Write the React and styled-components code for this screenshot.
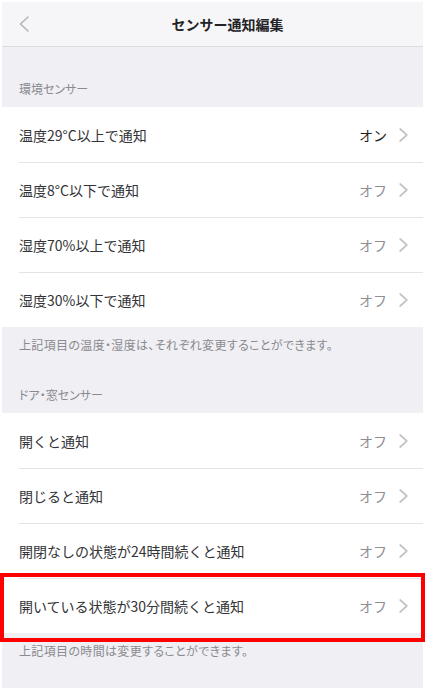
import React from "react";
import styled, { createGlobalStyle } from "styled-components";

const GlobalStyle = createGlobalStyle`
  html, body { margin: 0; padding: 0; background: #ffffff; }
  body { font-family: "Noto Sans CJK JP", "Noto Sans", sans-serif; -webkit-font-smoothing: antialiased; }
  * { box-sizing: border-box; }
`;

const Frame = styled.div`
  padding: 2px 3px 0 2px;
  height: 688px;
  overflow: hidden;
  background: #ffffff;
`;

const Screen = styled.div`
  background: #efeff4;
  min-height: 686px;
`;

const NavBar = styled.header`
  height: 45px;
  display: flex;
  align-items: center;
  background: #f6f6f8;
  border-bottom: 1px solid #dcdce0;
`;

const BackButton = styled.button`
  width: 60px;
  height: 44px;
  border: 0;
  background: transparent;
  padding: 0 0 0 16px;
  display: flex;
  align-items: center;
`;

const NavTitle = styled.h1`
  flex: 1;
  margin: 0;
  text-align: center;
  font-size: 14px;
  font-weight: 600;
  color: #222226;
`;

const NavSpacer = styled.div`
  width: 30px;
`;

const SectionHeader = styled.div`
  height: ${(p) => p.$height}px;
  display: flex;
  align-items: flex-end;
  padding: 0 17px 10px;
  font-size: 12px;
  line-height: 17px;
  color: #8a8a8f;
  font-feature-settings: "palt";
`;

const SectionFooter = styled.p`
  margin: 0;
  padding: 9px 17px 0;
  font-size: 12px;
  line-height: 17px;
  color: #8a8a8f;
  font-feature-settings: "palt";
  letter-spacing: 0.35px;
`;

const Group = styled.ul`
  list-style: none;
  margin: 0;
  padding: 0;
  background: #ffffff;
`;

const Row = styled.li`
  position: relative;
  padding-left: 17px;
  background: #ffffff;
`;

const RowInner = styled.div`
  height: 55px;
  display: flex;
  align-items: center;
  padding-right: 15px;
  border-top: ${(p) => (p.$first ? "none" : "1px solid #e4e4e7")};
`;

const Label = styled.span`
  flex: 1;
  font-size: 14px;
  color: #333336;
`;

const Value = styled.span`
  font-size: 14px;
  color: ${(p) => (p.$on ? "#1f1f22" : "#8e8e93")};
  margin-right: 12px;
`;

const Highlight = styled.div`
  position: absolute;
  top: -5px;
  bottom: -9px;
  left: -2px;
  right: -2px;
  border: 4px solid #ff0000;
  pointer-events: none;
`;

const Chevron = () => (
  <svg width="9" height="14" viewBox="0 0 9 14" fill="none">
    <path d="M1.2 1 L7.8 7 L1.2 13" stroke="#c4c4c8" strokeWidth="1.7" strokeLinecap="round" strokeLinejoin="round" />
  </svg>
);

const BackIcon = () => (
  <svg width="12" height="16" viewBox="0 0 12 16" fill="none">
    <path d="M10 1 L2.5 8 L10 15" stroke="#b4b4b9" strokeWidth="1.6" strokeLinecap="round" strokeLinejoin="round" />
  </svg>
);

const env = [
  { label: "温度29°C以上で通知", on: true },
  { label: "温度8°C以下で通知", on: false },
  { label: "湿度70%以上で通知", on: false },
  { label: "湿度30%以下で通知", on: false },
];

const door = [
  { label: "開くと通知", on: false },
  { label: "閉じると通知", on: false },
  { label: "開閉なしの状態が24時間続くと通知", on: false },
  { label: "開いている状態が30分間続くと通知", on: false, highlight: true },
];

const Items = ({ items }) => (
  <Group>
    {items.map((it, i) => (
      <Row key={it.label}>
        <RowInner $first={i === 0}>
          <Label>{it.label}</Label>
          <Value $on={it.on}>{it.on ? "オン" : "オフ"}</Value>
          <Chevron />
        </RowInner>
        {it.highlight && <Highlight />}
      </Row>
    ))}
  </Group>
);

export default function App() {
  return (
    <>
      <GlobalStyle />
      <Frame>
        <Screen>
          <NavBar>
            <BackButton aria-label="戻る">
              <BackIcon />
            </BackButton>
            <NavTitle>センサー通知編集</NavTitle>
            <NavSpacer />
          </NavBar>
          <SectionHeader $height={60}>環境センサー</SectionHeader>
          <Items items={env} />
          <SectionFooter>上記項目の温度・湿度は、それぞれ変更することができます。</SectionFooter>
          <SectionHeader $height={60}>ドア・窓センサー</SectionHeader>
          <Items items={door} />
          <SectionFooter>上記項目の時間は変更することができます。</SectionFooter>
        </Screen>
      </Frame>
    </>
  );
}
